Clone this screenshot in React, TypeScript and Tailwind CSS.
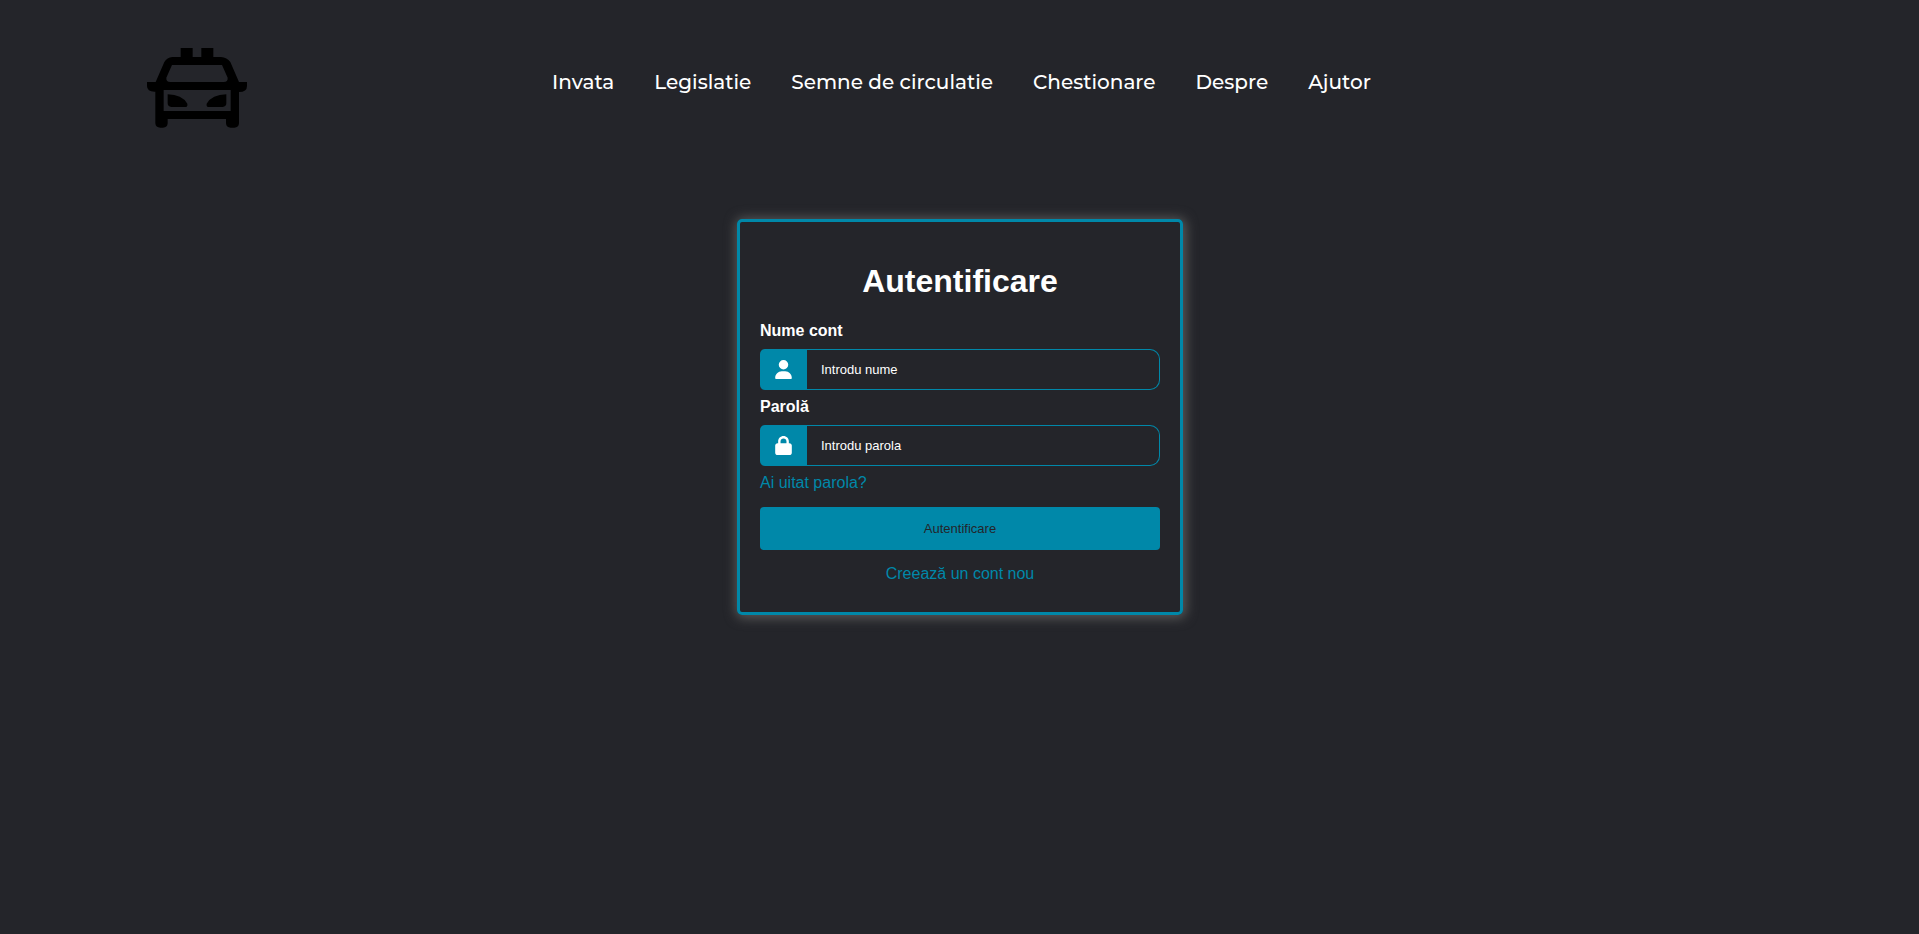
import { FaUser, FaLock } from "react-icons/fa6";
import type { ReactNode } from "react";

const links = ["Invata", "Legislatie", "Semne de circulatie", "Chestionare", "Despre", "Ajutor"];

function CarLogo() {
  return (
    <svg viewBox="0 0 300 240" className="h-20 w-[100px]" fill="#000" aria-label="Logo" role="img">
      <path d="M101 0h36v28h-36zM163 0h36v28h-36z" />
      <path
        fillRule="evenodd"
        d="M76 27H222Q240 28 250 42L276 102H300V114Q300 132 276 132V226Q275 239 262 239H251Q238 239 237 226V213H62V226Q61 239 48 239H40Q26 239 25 226V131Q0 132 0 114V102H26L52 42Q60 28 76 27ZM75 51L58 89Q57 102 70 102H230Q243 102 242 89L225 51ZM50 126V189H251V126Z"
      />
      <path d="M62 139Q105 140 121 167Q123 177 114 177H73Q62 176 62 166ZM238 139Q195 140 179 167Q177 177 186 177H227Q238 176 238 166Z" />
    </svg>
  );
}

function Field({ id, label, type, placeholder, icon }: { id: string; label: string; type: string; placeholder: string; icon: ReactNode }) {
  return (
    <div>
      <label htmlFor={id} className="block text-base leading-[18px] font-bold">
        {label}
      </label>
      <div className="mt-[9px] flex h-[41px]">
        <span className="flex w-[47px] items-center justify-center rounded-l-[5px] bg-[#0088a9]">{icon}</span>
        <input
          id={id}
          type={type}
          placeholder={placeholder}
          className="min-w-0 flex-1 rounded-r-[10px] border border-l-0 border-[#0088a9] bg-transparent px-[14px] text-[13px] text-white outline-none placeholder:text-white"
        />
      </div>
    </div>
  );
}

export default function App() {
  return (
    <div className="min-h-screen bg-[#24252a] font-['Liberation_Sans',Arial,sans-serif] text-white">
      <header className="grid grid-cols-[1fr_auto_1fr] items-center pt-12 pr-[143px] pl-[147px]">
        <a href="#" className="justify-self-start">
          <CarLogo />
        </a>
        <nav className="pb-3">
          <ul className="flex gap-10 font-[Montserrat,Inter,sans-serif] text-xl font-medium">
            {links.map((l) => (
              <li key={l}>
                <a href="#">{l}</a>
              </li>
            ))}
          </ul>
        </nav>
      </header>
      <main className="flex justify-center pt-[91px] pr-4 pl-[17px]">
        <form
          onSubmit={(e) => e.preventDefault()}
          className="w-full max-w-[446px] rounded-[5px] border-3 border-[#0088a9] px-5 pt-[41px] pb-[29px] shadow-[1px_1px_12px_2px_#5a5a5a]"
        >
          <h1 className="mb-[22px] text-center text-[32px] leading-[37px] font-bold">Autentificare</h1>
          <div className="flex flex-col gap-2">
            <Field id="name" label="Nume cont" type="text" placeholder="Introdu nume" icon={<FaUser size={19} />} />
            <Field id="password" label="Parolă" type="password" placeholder="Introdu parola" icon={<FaLock size={19} />} />
          </div>
          <a href="#" className="mt-2 block text-base leading-[18px] text-[#0088a9]">
            Ai uitat parola?
          </a>
          <button type="submit" className="mt-[15px] block h-[43px] w-full rounded-[4px] bg-[#0088a9] text-[13px] text-[#24252a]">
            Autentificare
          </button>
          <a href="#" className="mt-[15px] block text-center text-base leading-[18px] text-[#0088a9]">
            Creează un cont nou
          </a>
        </form>
      </main>
    </div>
  );
}
